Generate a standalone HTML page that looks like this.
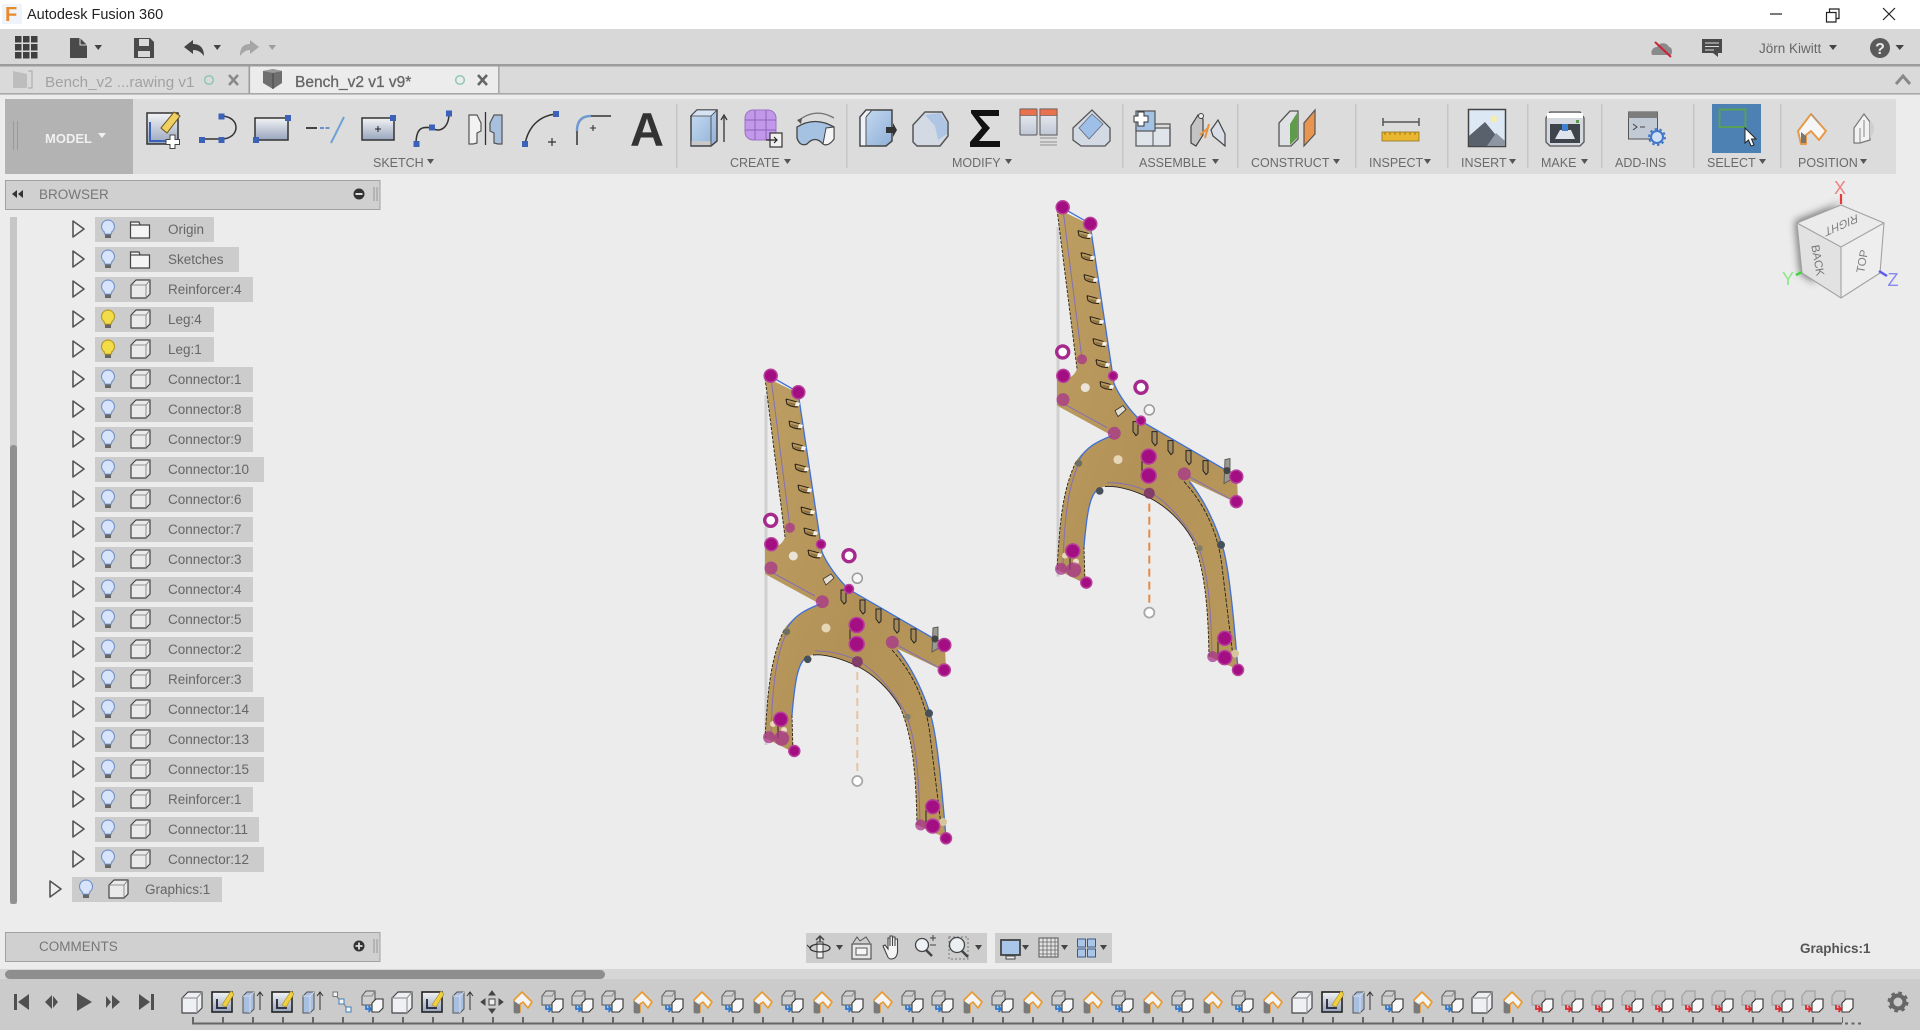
<!DOCTYPE html>
<html lang="en"><head><meta charset="utf-8"><title>Autodesk Fusion 360</title>
<style>
html,body{margin:0;padding:0;background:#ececec;width:1920px;height:1030px;overflow:hidden}
svg{display:block;font-family:"Liberation Sans",sans-serif}
.l{font-size:12.5px;fill:#6a6a6a}
.t{font-size:13.5px;fill:#666}
.m{fill:#a30f82;stroke:#b8409c;stroke-width:1.5}
.p{fill:#a8308c;opacity:.72}
.s{fill:#cccccc}
</style></head><body>
<svg width="1920" height="1030" viewBox="0 0 1920 1030" xmlns="http://www.w3.org/2000/svg">
<defs>
<filter id="bl" x="-40%" y="-40%" width="180%" height="180%"><feGaussianBlur stdDeviation="4"/></filter>
<linearGradient id="g1" x1="0" y1="0" x2="0" y2="1"><stop offset="0" stop-color="#f2f3f5"/><stop offset="1" stop-color="#98a5bd"/></linearGradient>
<linearGradient id="g2" x1="0" y1="0" x2="1" y2="1"><stop offset="0" stop-color="#c8dcf2"/><stop offset="1" stop-color="#8fb0d8"/></linearGradient>
<linearGradient id="g3" x1="0" y1="0" x2="0" y2="1"><stop offset="0" stop-color="#eef0f4"/><stop offset="1" stop-color="#c0c8d6"/></linearGradient>
<linearGradient id="wood" x1="0" y1="0" x2="1" y2="1"><stop offset="0" stop-color="#bd9e62"/><stop offset=".5" stop-color="#b39258"/><stop offset="1" stop-color="#b8985a"/></linearGradient>

<g id="b"><path d="M0,-10 a6.5,6.5 0 0 1 4,11.6 l-.9,2.6 h-6.2 l-.9,-2.6 A6.5,6.5 0 0 1 0,-10z" fill="#d7e4fb" stroke="#7394cc" stroke-width="1.2"/><rect x="-3" y="4.500" width="6" height="3.500" fill="#666"/></g>
<g id="y"><path d="M0,-10 a6.5,6.5 0 0 1 4,11.6 l-.9,2.6 h-6.2 l-.9,-2.6 A6.5,6.5 0 0 1 0,-10z" fill="#f3dc4a" stroke="#b59a22" stroke-width="1.2"/><rect x="-3" y="4.500" width="6" height="3.500" fill="#666"/></g>
<path id="a" d="M-5,-8 L6,0 L-5,8 Z" fill="#efefef" stroke="#555" stroke-width="1.6" stroke-linejoin="round"/>
<g id="f" fill="#f4f4f4" stroke="#444" stroke-width="1.2"><path d="M-9.500,-8 H-1 L0,-5 H9.500 V8 H-9.500 Z"/><path d="M-9.500,-5 H0" fill="none"/></g>
<g id="c" stroke="#444" stroke-width="1.2" stroke-linejoin="round"><path d="M-9,-4 L-4,-9 H10 V5 L6,9 H-9 Z" fill="#eaeaea"/><path d="M-9,-4 H6 V9 M6,-4 L10,-9" fill="none" stroke="#777" stroke-width=".8"/></g>

<g id="tc" stroke="#444" stroke-width="1.2" stroke-linejoin="round"><path d="M-10,-4 L-4,-10 H10 V6 L5,11 H-10 Z" fill="#eef0f4"/><path d="M-10,-4 H5 V11 M5,-4 L10,-10" fill="none" stroke="#999"/></g>
<g id="ts"><rect x="-10" y="-10" width="20" height="20" fill="url(#g1)" stroke="#222" stroke-width="1.600"/><path d="M-5,-3 V6 H5" fill="none" stroke="#223" stroke-width="1.800"/><path d="M0,3 L9,-11 L12,-8 L4,5 Z" fill="#f0d040" stroke="#a88b20" stroke-width=".6"/></g>
<g id="te" stroke="#555" stroke-width="1"><path d="M-9,-6 L-5,-10 H2 V7 L-2,11 H-9 Z" fill="#a7c0e0"/><path d="M-9,-6 H-2 V11 M-2,-6 L2,-10" fill="none" stroke="#dde"/><path d="M8,8 V-9" stroke="#333"/><path d="M5,-6 L8,-10 L11,-6" fill="none" stroke="#333"/></g>
<g id="td" fill="#f5f5f5" stroke="#3f7fc0" stroke-width="1"><rect x="-9" y="-10" width="4.500" height="4.500" stroke="#777"/><rect x="-3" y="-3" width="5" height="5"/><rect x="4" y="5" width="5" height="5"/><path d="M-5,-5 L-3,-3 M2,2 L4,5" fill="none" stroke="#777"/></g>
<g id="tb"><path d="M-10,-6 L-6,-11 H3 V3 H-10 Z" fill="#cfcfcf" stroke="#555" stroke-width="1"/><path d="M-10,-6 H0 L3,-11" fill="none" stroke="#888"/><path d="M0,1 L4,-3 H11 V6 L7,10 H0 Z" fill="#f8f8f8" stroke="#333" stroke-width="1.100"/><path d="M-6,3 V7 H-1 M-3.500,4 L-1,7 L-3.500,10" fill="none" stroke="#2f7ad0" stroke-width="1.800"/></g>
<g id="tr"><path d="M-10,-6 L-6,-11 H3 V3 H-10 Z" fill="#c6c6c6" stroke="#9a9a9a" stroke-width="1"/><path d="M0,1 L4,-3 H11 V6 L7,10 H0 Z" fill="#f8f8f8" stroke="#333" stroke-width="1.100"/><path d="M-6,3 V7 H-1 M-3.500,4 L-1,7 L-3.500,10" fill="none" stroke="#dc2a30" stroke-width="1.800"/></g>
<g id="tj"><path d="M-8,10 V-2 L0,-10 L10,0 L6,6 L1,0 L-2,2 V10 Z" fill="#f4f4f4" stroke="#e89a30" stroke-width="1.600" stroke-linejoin="round"/><path d="M-8,11 V-1 L-2,3 V11 Q-5,12 -8,11 Z" fill="#7a7a7a"/></g>
<g id="tm" fill="#444" stroke="#444"><rect x="-3" y="-3" width="6" height="6" fill="#eee"/><path d="M0,-11 L-3,-7 H3 Z M0,11 L-3,7 H3 Z M-11,0 L-7,-3 V3 Z M11,0 L7,-3 V3 Z"/></g>

<g id="n"><path d="M-7,-4 C-3,-3 1,-2 4,-1 M-7,-4 L-6,1 C-3,3 1,4 5,4" fill="none" stroke="#2a2218" stroke-width="1.100"/><path d="M-5,-1 L3,1 L2,3 L-4,1 Z" fill="#8d7040"/><path d="M3,-1 L7,0 L6,3 L2,3 Z" fill="#f4f2ec"/></g>
<path id="v" d="M-2,-7 H3 V5 L1,7 L-2,3 Z" fill="#a58b5c" stroke="#222" stroke-width="1"/>

<g id="bench">
<path d="M766,395 V745" stroke="#d0d0d0" stroke-width="3" fill="none"/>
<path id="bp" d="M765,377 L798,393 L822,552 C826,562 838,580 850,590 L945,645 L946,672 L898,649 C912,667 925,695 932,720 C938,745 942,790 946,838 L917,825 C916,770 912,735 900,707 C890,690 875,675 857,666 C840,658 825,654 813,655 C798,657 795,680 792,715 L793,752 L765,738 C768,690 770,660 785,628 C795,615 805,610 820,604 L765,574 L765,547 C775,548 782,546 785,537 Z" fill="url(#wood)"/>
<path d="M765,378 L785,537 M792,715 L793,752 M917,825 C916,770 912,735 900,707 M784,630 C770,660 768,690 765,738" fill="none" stroke="#2a2418" stroke-width=".9" stroke-dasharray="3 1.500"/>
<path d="M813,655 C825,654 840,658 857,666 C875,675 890,690 900,707" fill="none" stroke="#222" stroke-width=".9"/>
<path d="M892,650 C912,672 926,700 930,735 L941,825" fill="none" stroke="#222" stroke-width=".9" stroke-dasharray="4 1.500"/>
<path d="M771,378 L790,528 M773,573 L815,596 M897,645 L943,670 M771,737 C772,680 778,650 787,632 M815,651 C835,651 850,656 862,663 C880,675 895,695 905,712 C915,735 919,770 920,825" fill="none" stroke="#8570b4" stroke-width="1"/>
<path d="M770,376 L798,392 L822,552 C826,562 838,580 850,590 L945,645 M897,650 C912,667 925,695 932,720 C938,745 942,790 946,838 M792,715 C795,680 798,662 807,657 M787,628 C795,615 805,610 820,604" fill="none" stroke="#3e70d8" stroke-width="1.300"/>
<use href="#n" x="793" y="403"/><use href="#n" x="796" y="425"/><use href="#n" x="799" y="447"/><use href="#n" x="802" y="468"/><use href="#n" x="805" y="489"/><use href="#n" x="808" y="511"/><use href="#n" x="811" y="532"/><use href="#n" x="815" y="554"/>
<path d="M823,579 L831,574 L834,578 L826,585 Z" fill="#e4dfd0" stroke="#333" stroke-width=".8"/>
<use href="#v" x="843" y="597"/><use href="#v" x="862" y="607"/><use href="#v" x="878" y="616"/><use href="#v" x="896" y="626"/><use href="#v" x="913" y="636"/>
<path d="M933,628 L938,627 L938,640 L944,645 L932,652 Z" fill="#9a9a90" stroke="#555" stroke-width=".9"/>
<path d="M850,628 V645 M926,805 V826 M778,720 V738" stroke="#222" stroke-width="1" fill="none"/>
<circle cx="793.300" cy="556" r="4.500" fill="#e9e3d8"/><circle cx="826" cy="628" r="4.500" fill="#e6d7b8"/>
<circle cx="773" cy="724" r="3" fill="#e6d7b8"/><circle cx="784" cy="730" r="3" fill="#ecdfc8"/><circle cx="943" cy="822" r="4" fill="#d7c49c"/>
<circle class="m" cx="770.700" cy="375.700" r="6.500"/><circle class="m" cx="798.300" cy="392.300" r="6.500"/><circle class="m" cx="771.300" cy="544.300" r="6.500"/><circle class="m" cx="821" cy="544.300" r="4.500"/><circle class="p" cx="771" cy="568" r="6.500"/><circle class="p" cx="790" cy="527.700" r="5"/><circle class="m" cx="849" cy="589" r="4.500"/>
<circle class="p" cx="822.300" cy="601.700" r="6.500"/><circle class="m" cx="856.700" cy="625" r="7.500"/><circle class="m" cx="856.700" cy="644" r="7.500"/><circle class="p" cx="892.300" cy="642.300" r="6.500"/><circle class="m" cx="944.300" cy="645" r="6.500"/><circle class="m" cx="944.300" cy="670" r="6"/>
<circle cx="857.300" cy="661.700" r="5.500" fill="#7a3068" opacity=".85"/>
<circle class="m" cx="780.700" cy="719.300" r="7"/><circle class="p" cx="781.700" cy="738.300" r="7.500"/><circle class="p" cx="769" cy="737.300" r="6"/><circle class="m" cx="794.300" cy="751" r="5.500"/>
<circle class="m" cx="932.700" cy="806.700" r="7"/><circle class="m" cx="932.700" cy="826" r="7"/><circle class="p" cx="920.700" cy="825" r="5.500"/><circle class="m" cx="946" cy="838.300" r="5.500"/>
<circle cx="786.700" cy="631.700" r="3.500" fill="#6e6e60"/><circle cx="807.700" cy="659.300" r="3.800" fill="#45505a"/><circle cx="929" cy="713.300" r="4" fill="#45505a"/><circle cx="907.700" cy="716.700" r="3" fill="#7d7d70"/><circle cx="935" cy="639" r="3.500" fill="#444"/>
<circle cx="770.700" cy="520.300" r="6" fill="#fff" stroke="#a52a8c" stroke-width="3.400"/><circle cx="849" cy="555.700" r="6" fill="#fff" stroke="#a52a8c" stroke-width="3.400"/>
<circle cx="857.300" cy="578.300" r="5" fill="#f6f6f6" stroke="#999" stroke-width="1.500"/><circle cx="857.300" cy="781" r="5" fill="#fff" stroke="#a8a8a8" stroke-width="1.800"/>
</g>
</defs>

<!-- canvas -->
<rect width="1920" height="1030" fill="#ececec"/>
<path d="M857.300,672 V775" stroke="#e6c4a2" stroke-width="2" stroke-dasharray="8 5"/>
<path d="M1149.300,503.600 V606.600" stroke="#e48a48" stroke-width="2" stroke-dasharray="8 5"/>
<use href="#bench"/>
<use href="#bench" transform="translate(292,-168.400)"/>

<!-- title bar -->
<rect width="1920" height="29" fill="#fff"/>
<rect x="2" y="4" width="20" height="20" fill="#eef4fa"/>
<text x="5" y="21" font-size="20" font-weight="bold" fill="#e8892a">F</text>
<text x="27" y="19" font-size="14.500" fill="#222">Autodesk Fusion 360</text>
<path d="M1770,14 H1782" stroke="#222" stroke-width="1.200"/>
<path d="M1826.500,12.500 H1836 V22 H1826.500 Z M1829.500,12 V9 H1839 V18.500 H1836.500" fill="none" stroke="#222" stroke-width="1.200"/>
<path d="M1883,8 L1895,20 M1895,8 L1883,20" stroke="#222" stroke-width="1.200"/>

<!-- top toolbar -->
<rect y="29" width="1920" height="35" fill="#d8d8d8"/>
<rect y="64" width="1920" height="2.500" fill="#9c9c9c"/>
<g fill="#3f3f3f"><rect x="15" y="36" width="6.500" height="6.500"/><rect x="23" y="36" width="6.500" height="6.500"/><rect x="31" y="36" width="6.500" height="6.500"/><rect x="15" y="44" width="6.500" height="6.500"/><rect x="23" y="44" width="6.500" height="6.500"/><rect x="31" y="44" width="6.500" height="6.500"/><rect x="15" y="52" width="6.500" height="6.500"/><rect x="23" y="52" width="6.500" height="6.500"/><rect x="31" y="52" width="6.500" height="6.500"/></g>
<path d="M70,38 H80 L87,45 V58 H70 Z" fill="#4a4a4a"/><path d="M80,38 V45 H87" fill="none" stroke="#d8d8d8" stroke-width="1"/>
<path d="M94.500,45 H102 L98.250,50 Z" fill="#444"/>
<path d="M134,38 H150 L154,42 V58 H134 Z" fill="#4a4a4a"/><rect x="139" y="39" width="10" height="7" fill="#d8d8d8"/><rect x="138" y="51" width="12" height="6" fill="#d8d8d8"/>
<path d="M184,47 L193,40 V44 C200,44 204,48 204,56 C201,52 198,50 193,50 V54 Z" fill="#444"/>
<path d="M213.500,45 H221 L217.250,50 Z" fill="#444"/>
<path d="M259,47 L250,40 V44 C243,44 240,48 240,56 C243,52 246,50 250,50 V54 Z" fill="#a6a6a6"/>
<path d="M268.500,45 H276 L272.250,50 Z" fill="#9c9c9c"/>
<path d="M1652,55 C1650,50 1654,47 1657,47 C1659,42 1667,42 1669,47 C1672,47 1673,52 1671,55 Z" fill="#8a8a8a"/><path d="M1655,42 L1671,57" stroke="#d01f3a" stroke-width="2"/>
<path d="M1702,39 H1722 V53 H1718 V57 L1713,53 H1702 Z" fill="#4a4a4a"/><path d="M1705,43 H1719 M1705,46.500 H1719 M1705,50 H1714" stroke="#ddd" stroke-width="1"/>
<text x="1759" y="53" font-size="13.500" fill="#666">Jörn Kiwitt</text>
<path d="M1829,45 H1837 L1833,50 Z" fill="#444"/>
<circle cx="1880" cy="48" r="10" fill="#5a5a5a"/><text x="1880" y="54" font-size="16" font-weight="bold" fill="#e8e8e8" text-anchor="middle">?</text>
<path d="M1895.500,45 H1904 L1899.750,50 Z" fill="#444"/>

<!-- tabs -->
<rect y="66.500" width="1920" height="26.500" fill="#dadada"/>
<rect y="93" width="1920" height="1.600" fill="#a8a8a8"/>
<rect x="250" y="66.500" width="248" height="26.500" fill="#ececec"/>
<rect x="248.500" y="66.500" width="1.600" height="27" fill="#9c9c9c"/><rect x="498" y="66.500" width="1.600" height="27" fill="#a8a8a8"/>
<path d="M13,71 L27,74 V88 H13 Z" fill="#bdbdbd"/><path d="M28,71 H32 V88 H28" fill="none" stroke="#a6a6a6"/>
<text x="45" y="87" font-size="15.200" fill="#a2a2a2">Bench_v2 ...rawing v1</text>
<circle cx="209" cy="80" r="4.300" fill="none" stroke="#8fc8b0" stroke-width="1.500"/>
<path d="M229,75 L238,85 M238,75 L229,85" stroke="#8a8a8a" stroke-width="2.600"/>
<path d="M263,71 L273,69 L282,71 V83 L273,89 L263,83 Z" fill="#6f6f6f"/><path d="M263,71 L273,73 L282,71 L273,69 Z" fill="#9a9a9a"/><path d="M273,73 V89" stroke="#444"/>
<text x="295" y="87" font-size="15.500" fill="#666" stroke="#666" stroke-width=".3">Bench_v2 v1 v9*</text>
<circle cx="460" cy="80" r="4.300" fill="none" stroke="#8fc8b0" stroke-width="1.500"/>
<path d="M478,75 L487,85 M487,75 L478,85" stroke="#666" stroke-width="2.600"/>
<path d="M1896,84 L1903,76 L1910,84" fill="none" stroke="#888" stroke-width="3"/>

<!-- ribbon -->
<rect x="5" y="99" width="1891" height="75" fill="#dcdcdc"/>
<rect x="5" y="99" width="128" height="75" fill="#b3b3b3"/>
<path d="M13.500,121 V150 M17.500,121 V150" stroke="#9a9a9a" stroke-width="1"/>
<text x="45" y="143" font-size="13" font-weight="bold" fill="#f0f0f0">MODEL</text>
<path d="M98,133 H106 L102,138 Z" fill="#f0f0f0"/>
<g fill="#c6c6c6"><rect x="676" y="104" width="1.500" height="64"/><rect x="846" y="104" width="1.500" height="64"/><rect x="1122" y="104" width="1.500" height="64"/><rect x="1237" y="104" width="1.500" height="64"/><rect x="1355" y="104" width="1.500" height="64"/><rect x="1447" y="104" width="1.500" height="64"/><rect x="1527" y="104" width="1.500" height="64"/><rect x="1601" y="104" width="1.500" height="64"/><rect x="1693" y="104" width="1.500" height="64"/><rect x="1780" y="104" width="1.500" height="64"/></g>
<g>
<text x="373" y="167" class="l">SKETCH</text><text x="730" y="167" class="l">CREATE</text><text x="952" y="167" class="l">MODIFY</text><text x="1139" y="167" class="l">ASSEMBLE</text><text x="1251" y="167" class="l">CONSTRUCT</text><text x="1369" y="167" class="l">INSPECT</text><text x="1461" y="167" class="l">INSERT</text><text x="1541" y="167" class="l">MAKE</text><text x="1615" y="167" class="l">ADD-INS</text><text x="1707" y="167" class="l">SELECT</text><text x="1798" y="167" class="l">POSITION</text>
</g>
<g fill="#555"><path d="M427,159 H434 L430.500,164 Z"/><path d="M784,159 H791 L787.500,164 Z"/><path d="M1005,159 H1012 L1008.500,164 Z"/><path d="M1212,159 H1219 L1215.500,164 Z"/><path d="M1333,159 H1340 L1336.500,164 Z"/><path d="M1424,159 H1431 L1427.500,164 Z"/><path d="M1509,159 H1516 L1512.500,164 Z"/><path d="M1581,159 H1588 L1584.500,164 Z"/><path d="M1759,159 H1766 L1762.500,164 Z"/><path d="M1860,159 H1867 L1863.500,164 Z"/></g>

<!-- sketch icons -->
<rect x="147" y="113" width="31" height="31" fill="url(#g1)" stroke="#333" stroke-width="1.500"/>
<path d="M150,122 V141 H166" fill="none" stroke="#3a62b8" stroke-width="2"/>
<path d="M161,128 L174,112 L180,116 L167,133 Z" fill="#f0d060" stroke="#6b5820" stroke-width="1"/>
<path d="M170,135 h5 v4.500 h4.500 v5 h-4.500 v4 h-5 v-4 h-4 v-5 h4 z" fill="#fff" stroke="#444" stroke-width="1"/>
<path d="M199,139 H221 C241,139 241,116 221,116" fill="none" stroke="#333" stroke-width="1.500"/>
<g fill="#3b62b8"><rect x="199" y="137" width="6" height="6"/><rect x="218.500" y="137" width="6" height="6"/><rect x="218.500" y="113.500" width="6" height="6"/></g>
<rect x="255" y="118" width="33" height="22" fill="url(#g1)" stroke="#333" stroke-width="1.500"/>
<rect x="285" y="115" width="6" height="6" fill="#3b62b8"/><rect x="253" y="137" width="6" height="6" fill="#3b62b8"/>
<path d="M306,128 H317" stroke="#333" stroke-width="1.800"/><path d="M320,128 H330" stroke="#5d86c8" stroke-width="1.800" stroke-dasharray="4 1.500"/><path d="M331,143 L344,117" stroke="#6fa0d8" stroke-width="2"/>
<rect x="362" y="118" width="32" height="22" fill="url(#g1)" stroke="#333" stroke-width="1.500"/><path d="M375,129 H381 M378,126 V132" stroke="#222"/><rect x="390" y="115" width="6" height="6" fill="#3b62b8"/>
<path d="M416,144 C416,125 425,127 432,128 C440,133 449,128 449,113" fill="none" stroke="#333" stroke-width="1.500"/>
<g fill="#3b62b8"><rect x="413.500" y="141" width="6" height="6"/><rect x="429" y="124.500" width="6" height="6"/><rect x="446" y="110.500" width="6" height="6"/></g>
<path d="M469,115 H477 L481,123 V131 L477,133 V143 L473,144 H469 Z" fill="#f2f2f2" stroke="#555" stroke-width="1.200"/><path d="M485.500,112 V145" stroke="#333" stroke-width="1.300"/><path d="M502,115 H494 L490,123 V131 L494,133 V143 L498,144 H502 Z" fill="#a8c0de" stroke="#555" stroke-width="1.200"/>
<path d="M525,144 C528,128 538,116 556,114" fill="none" stroke="#333" stroke-width="1.500"/><rect x="522" y="141" width="6" height="6" fill="#3b62b8"/><rect x="553" y="111" width="6" height="6" fill="#3b62b8"/><path d="M548,142 H556 M552,138 V146" stroke="#333" stroke-width="1.200"/>
<path d="M577,145 V130 M590,116 H611" stroke="#333" stroke-width="1.500" fill="none"/><path d="M577,131 Q577,116 591,116" fill="none" stroke="#6f9ad0" stroke-width="2.500"/><path d="M590,128 H596 M593,125 V131" stroke="#333" stroke-width="1.100"/>
<text x="630" y="146" font-size="47" font-weight="bold" fill="#333">A</text>

<!-- create -->
<path d="M691,116 L697,110 H717 V141 L711,146 H691 Z" fill="url(#g2)" stroke="#444" stroke-width="1.500"/><path d="M691,116 H711 L717,110 H697 Z" fill="#d5e3f4" stroke="#444" stroke-width=".8"/><path d="M711,116 V146" stroke="#555"/><rect x="691.500" y="141" width="19" height="4" fill="#c9c9c9"/>
<path d="M724,142 V117 M721,120 L724,115 L727,120" fill="none" stroke="#333" stroke-width="1.300"/>
<rect x="745" y="110" width="31" height="30" rx="8" fill="#c299ea" stroke="#9a72c4" stroke-width="1"/><path d="M745,120 H776 M745,130 H776 M755,110 V140 M766,110 V140" stroke="#8e62bc" stroke-width="1"/>
<rect x="770" y="133" width="12" height="14" fill="#efefef" stroke="#333" stroke-width="1.200"/><path d="M766,140 H777 M774,137 L777,140 L774,143" fill="none" stroke="#222" stroke-width="1.200"/>
<path d="M798,121 Q815,107 834,118" fill="none" stroke="#777" stroke-width="1.400"/><path d="M797,120 L802,118 L801,124 Z" fill="#555"/>
<path d="M797,127 Q815,116 834,127 V139 Q828,147 823,144 Q815,135 807,144 Q800,147 797,138 Z" fill="#a5c2e2" stroke="#444" stroke-width="1.300"/><path d="M823,144 L826,128 L834,127 V139 Q828,147 823,144 Z" fill="#f5f5f5" stroke="#444" stroke-width="1"/>
<!-- modify -->
<path d="M860,117 L866,110 H892 V141 L886,146 H860 Z" fill="url(#g2)" stroke="#444" stroke-width="1.500"/><path d="M860.800,117 L866.500,110.800 H872 L866,117 V145.300 H860.800 Z" fill="#eef2f8"/><path d="M866,117 V146 M866,117 L872,110" stroke="#555" fill="none"/><path d="M886,127 H893 V123 L897,130 L893,137 V133 H886 Z" fill="#333"/>
<path d="M913,142 V125 L925,112 H942 L948,122 V136 L940,146 H917 Z" fill="#d3dae4" stroke="#555" stroke-width="1.500" stroke-linejoin="round"/><path d="M925,115 L940,113 L947,123 V134 L938,140 L935,126 Z" fill="#aec6e4"/>
<path d="M971,110 H999 V116 H979 L990,128 L979,141 H1000 V147 H970 V142 L982,128 L971,113 Z" fill="#111"/>
<rect x="1020" y="109" width="17" height="26" rx="1" fill="url(#g3)" stroke="#555"/><rect x="1020" y="109" width="17" height="6.500" fill="#e8724e" stroke="#555" stroke-width=".6"/>
<rect x="1040" y="109" width="17" height="26" fill="url(#g3)" stroke="#555"/><rect x="1040" y="109" width="17" height="6.500" fill="#e8724e" stroke="#555" stroke-width=".6"/><path d="M1040,138 H1057 M1040,142 H1057 M1040,145 H1057" stroke="#aaa" stroke-width="1.500"/>
<path d="M1073,128 L1092,110 L1110,128 V141 L1105,146 H1081 L1073,140 Z" fill="#d3dae4" stroke="#555" stroke-width="1.300"/><path d="M1079,128 L1092,114 L1103,124 L1089,139 Z" fill="#9ec0e8" stroke="#667" stroke-width=".8"/>
<!-- assemble -->
<rect x="1136" y="128" width="34" height="18" fill="#dfe3ea" stroke="#555" stroke-width="1.200"/><path d="M1153,128 V146 M1153,128 L1156,124" stroke="#555" fill="none"/><path d="M1155,124 H1170 V146" fill="none" stroke="#555" stroke-width="1.200"/>
<rect x="1136" y="111" width="19" height="20" fill="#a4c2e4" stroke="#555" stroke-width="1.200"/>
<path d="M1138,112 h6 v4 h4 v6 h-4 v4 h-6 v-4 h-4 v-6 h4 z" fill="#fff" stroke="#333" stroke-width="1"/>
<path d="M1191,143 V126 L1198,115 L1203,119 V135 L1196,146 Z" fill="#c4c4c4" stroke="#444" stroke-width="1.200"/><path d="M1211,130 L1218,120 L1225,134 V146 L1213,136 Z" fill="#d8dde6" stroke="#444" stroke-width="1.200"/><path d="M1205,138 L1209,124 M1200,135 L1208,128" stroke="#e69240" stroke-width="2"/><circle cx="1201" cy="116" r="2.500" fill="#eee" stroke="#444"/>
<!-- construct -->
<path d="M1279,145 V123 L1290,111 H1298 V139 L1291,146 H1279 Z" fill="#dfe1e4" stroke="#555" stroke-width="1.300"/><path d="M1290,124 L1297,113 V138 L1290,145 Z" fill="#5e9c4b"/>
<path d="M1304,146 V123 L1315,110 V134 Z" fill="#e8954f" stroke="#555" stroke-width="1.200"/>
<!-- inspect -->
<path d="M1383,122 H1419 M1383,118 V126 M1419,118 V126" stroke="#555" stroke-width="1.500"/><rect x="1382" y="132" width="37" height="9" fill="#e9b730" stroke="#8f7426" stroke-width=".8"/><path d="M1385,132 V135 M1390,132 V135 M1395,132 V135 M1400,132 V135 M1405,132 V135 M1410,132 V135 M1415,132 V135" stroke="#8f6a10" stroke-width=".8"/>
<!-- insert -->
<rect x="1468.500" y="109.500" width="37" height="37" fill="#dce8f4" stroke="#444" stroke-width="1.500"/><circle cx="1494" cy="119" r="3.500" fill="#f5ecb0"/><path d="M1469,146 V136 L1485,122 L1495,134 L1505,146 Z" fill="#59616d"/><path d="M1487,146 L1496,133 L1505,141 V146 Z" fill="#8d96a2"/>
<!-- make -->
<path d="M1546,118 L1550,112 H1580 L1584,118 V142 L1580,146 H1550 L1546,142 Z" fill="#d5d8de" stroke="#555" stroke-width="1.300"/><rect x="1550" y="124" width="30" height="19" fill="#3f444c"/><rect x="1547" y="113" width="36" height="5" fill="#fff"/><path d="M1555,139 L1560,130 H1571 L1575,139 Z" fill="#dfe4ec"/><rect x="1562" y="124" width="6" height="7" fill="#3f7fd0"/><rect x="1576" y="120" width="3" height="3" fill="#5a9a4a"/>
<!-- add-ins -->
<rect x="1628.500" y="112" width="29" height="27" fill="#c2cad6" stroke="#555"/><rect x="1628.500" y="112" width="29" height="6" fill="#7d7d7d"/><path d="M1633,124 L1637,127 L1633,130 M1640,127 H1645" fill="none" stroke="#444"/>
<circle cx="1657" cy="137" r="6" fill="#cfe0f6" stroke="#3f76c8" stroke-width="2"/><circle cx="1657" cy="137" r="8" fill="none" stroke="#3f76c8" stroke-width="1.800" stroke-dasharray="2.500 2.500"/>
<!-- select -->
<rect x="1712" y="104" width="49" height="49" fill="#4d81b3"/><rect x="1719.500" y="109.500" width="26" height="17.500" fill="none" stroke="#59a34d" stroke-width="1.800"/>
<path d="M1745,128 V143 L1748.500,140 L1751,146 L1754,145 L1751.500,139 L1756,139 Z" fill="#fff" stroke="#222" stroke-width="1"/>
<!-- position -->
<path d="M1798,131 L1811,114 L1826,131 L1819,140 L1811,131 L1806,135 V144 H1801 Z" fill="#f6f6f6" stroke="#e59a4a" stroke-width="2" stroke-linejoin="round"/><path d="M1801,143 V132 L1806,136 V143 Z" fill="#777"/><path d="M1811,114 L1819,123" stroke="#999"/>
<path d="M1854,128 L1864,114 L1870,122 V140 L1860,143 H1854 Z" fill="#f2f2f2" stroke="#777" stroke-width="1.200"/><path d="M1860,128 V143 M1864,120 V137" stroke="#888"/><path d="M1870,120 Q1878,128 1870,138 Z" fill="#cfcfcf"/>

<!-- viewcube -->
<path d="M1841,203 L1795,221 L1800,273 L1815,283 L1815,232 Z" fill="#555" opacity=".8" filter="url(#bl)"/>
<path d="M1841,205 L1884,223 L1880,273 L1841,298 L1802,273 L1797,223 Z" fill="#e8e8e8"/>
<path d="M1841,205 L1884,223 L1841,247 L1797,223 Z" fill="#ebebeb"/>
<path d="M1797,223 L1841,247 V298 L1802,273 Z" fill="#e2e2e2"/><path d="M1884,223 L1841,247 V298 L1880,273 Z" fill="#eeeeee"/>
<path d="M1841,205 L1884,223 L1880,273 L1841,298 L1802,273 L1797,223 Z M1797,223 L1841,247 L1884,223 M1841,247 V298" fill="none" stroke="#a2a2a2" stroke-width="1.100"/>
<text font-size="11.500" fill="#808080" text-anchor="middle" transform="translate(1841,221) rotate(156) skewX(-20)">RIGHT</text>
<text font-size="11.500" fill="#777" text-anchor="middle" transform="translate(1814,261) rotate(80)">BACK</text>
<text font-size="11.500" fill="#808080" text-anchor="middle" transform="translate(1866,262) rotate(-80)">TOP</text>
<path d="M1841,194 V204" stroke="#e63a3a" stroke-width="2.200"/><path d="M1796,275 L1802,272" stroke="#3ed43e" stroke-width="2.500"/><path d="M1879,271 L1887,276" stroke="#5a5af0" stroke-width="2.500"/>
<text x="1840" y="194" font-size="18" fill="#f08080" text-anchor="middle">X</text><text x="1788" y="285" font-size="18" fill="#88e888" text-anchor="middle">Y</text><text x="1893" y="286" font-size="18" fill="#8888f0" text-anchor="middle">Z</text>

<!-- browser -->
<rect x="5.500" y="180.500" width="374.500" height="29" fill="#d0d0d0" stroke="#a2a2a2"/>
<path d="M12,194 L17,190 V198 Z M18,194 L23,190 V198 Z" fill="#333"/>
<text x="39" y="199" font-size="13.500" fill="#777">BROWSER</text>
<circle cx="359" cy="194" r="5.500" fill="#333"/><rect x="355.500" y="193" width="7" height="2" fill="#ddd"/>
<path d="M374,187 V201 M377,187 V201" stroke="#999"/>

<rect x="10" y="217" width="7" height="687" fill="#c6c6c6"/><rect x="10" y="445" width="7" height="459" rx="3" fill="#909090"/>

<g class="s">
<rect x="95" y="217" width="119" height="25"/><rect x="95" y="247" width="144" height="25"/><rect x="95" y="277" width="158" height="25"/><rect x="95" y="307" width="119" height="25"/><rect x="95" y="337" width="119" height="25"/><rect x="95" y="367" width="158" height="25"/><rect x="95" y="397" width="158" height="25"/><rect x="95" y="427" width="158" height="25"/><rect x="95" y="457" width="169" height="25"/><rect x="95" y="487" width="158" height="25"/><rect x="95" y="517" width="158" height="25"/><rect x="95" y="547" width="158" height="25"/><rect x="95" y="577" width="158" height="25"/><rect x="95" y="607" width="158" height="25"/><rect x="95" y="637" width="158" height="25"/><rect x="95" y="667" width="158" height="25"/><rect x="95" y="697" width="169" height="25"/><rect x="95" y="727" width="169" height="25"/><rect x="95" y="757" width="169" height="25"/><rect x="95" y="787" width="158" height="25"/><rect x="95" y="817" width="164" height="25"/><rect x="95" y="847" width="169" height="25"/><rect x="72" y="877" width="150" height="25"/>
</g>
<g><use href="#a" x="78" y="229"/><use href="#a" x="78" y="259"/><use href="#a" x="78" y="289"/><use href="#a" x="78" y="319"/><use href="#a" x="78" y="349"/><use href="#a" x="78" y="379"/><use href="#a" x="78" y="409"/><use href="#a" x="78" y="439"/><use href="#a" x="78" y="469"/><use href="#a" x="78" y="499"/><use href="#a" x="78" y="529"/><use href="#a" x="78" y="559"/><use href="#a" x="78" y="589"/><use href="#a" x="78" y="619"/><use href="#a" x="78" y="649"/><use href="#a" x="78" y="679"/><use href="#a" x="78" y="709"/><use href="#a" x="78" y="739"/><use href="#a" x="78" y="769"/><use href="#a" x="78" y="799"/><use href="#a" x="78" y="829"/><use href="#a" x="78" y="859"/><use href="#a" x="55" y="889"/></g>
<g><use href="#b" x="108" y="230"/><use href="#b" x="108" y="260"/><use href="#b" x="108" y="290"/><use href="#y" x="108" y="320"/><use href="#y" x="108" y="350"/><use href="#b" x="108" y="380"/><use href="#b" x="108" y="410"/><use href="#b" x="108" y="440"/><use href="#b" x="108" y="470"/><use href="#b" x="108" y="500"/><use href="#b" x="108" y="530"/><use href="#b" x="108" y="560"/><use href="#b" x="108" y="590"/><use href="#b" x="108" y="620"/><use href="#b" x="108" y="650"/><use href="#b" x="108" y="680"/><use href="#b" x="108" y="710"/><use href="#b" x="108" y="740"/><use href="#b" x="108" y="770"/><use href="#b" x="108" y="800"/><use href="#b" x="108" y="830"/><use href="#b" x="108" y="860"/><use href="#b" x="86" y="890"/></g>
<g><use href="#f" x="140" y="230"/><use href="#f" x="140" y="260"/><use href="#c" x="140" y="289"/><use href="#c" x="140" y="319"/><use href="#c" x="140" y="349"/><use href="#c" x="140" y="379"/><use href="#c" x="140" y="409"/><use href="#c" x="140" y="439"/><use href="#c" x="140" y="469"/><use href="#c" x="140" y="499"/><use href="#c" x="140" y="529"/><use href="#c" x="140" y="559"/><use href="#c" x="140" y="589"/><use href="#c" x="140" y="619"/><use href="#c" x="140" y="649"/><use href="#c" x="140" y="679"/><use href="#c" x="140" y="709"/><use href="#c" x="140" y="739"/><use href="#c" x="140" y="769"/><use href="#c" x="140" y="799"/><use href="#c" x="140" y="829"/><use href="#c" x="140" y="859"/><use href="#c" x="118" y="889"/></g>
<g>
<text class="t" x="168" y="234">Origin</text><text class="t" x="168" y="264">Sketches</text><text class="t" x="168" y="294">Reinforcer:4</text><text class="t" x="168" y="324">Leg:4</text><text class="t" x="168" y="354">Leg:1</text><text class="t" x="168" y="384">Connector:1</text><text class="t" x="168" y="414">Connector:8</text><text class="t" x="168" y="444">Connector:9</text><text class="t" x="168" y="474">Connector:10</text><text class="t" x="168" y="504">Connector:6</text><text class="t" x="168" y="534">Connector:7</text><text class="t" x="168" y="564">Connector:3</text><text class="t" x="168" y="594">Connector:4</text><text class="t" x="168" y="624">Connector:5</text><text class="t" x="168" y="654">Connector:2</text><text class="t" x="168" y="684">Reinforcer:3</text><text class="t" x="168" y="714">Connector:14</text><text class="t" x="168" y="744">Connector:13</text><text class="t" x="168" y="774">Connector:15</text><text class="t" x="168" y="804">Reinforcer:1</text><text class="t" x="168" y="834">Connector:11</text><text class="t" x="168" y="864">Connector:12</text><text class="t" x="145" y="894">Graphics:1</text>
</g>

<!-- comments -->
<rect x="5.500" y="932.500" width="374.500" height="29" fill="#d0d0d0" stroke="#a2a2a2"/>
<text x="39" y="951" font-size="13.500" fill="#777">COMMENTS</text>
<circle cx="359" cy="946" r="5.500" fill="#333"/><path d="M355.500,946 H362.500 M359,942.500 V949.500" stroke="#ddd" stroke-width="1.800"/>
<path d="M374,939 V953 M377,939 V953" stroke="#999"/>

<!-- view bar -->
<rect x="806" y="933" width="181" height="30" fill="#cdcdcd"/><rect x="995" y="933" width="117" height="30" fill="#cdcdcd"/>
<path d="M820,937 V958 M816,940 L820,936 L824,940" fill="none" stroke="#444" stroke-width="1.500"/><rect x="817" y="942" width="6" height="16" fill="#f4f4f4" stroke="#444"/><ellipse cx="820" cy="948" rx="10" ry="4" fill="none" stroke="#333" stroke-width="1.300"/><path d="M810,948 L807,945 M810,948 L813,945" stroke="#333"/>
<path d="M836,945 H843 L839.500,950 Z" fill="#444"/>
<rect x="852" y="944" width="19" height="15" fill="#e8e8e8" stroke="#555" stroke-width="1.200"/><rect x="856" y="948" width="11" height="7" fill="#f6f6f6" stroke="#555"/><path d="M853,943 L857,937 L860,941 L866,937 L870,943" fill="none" stroke="#555"/>
<path d="M887,955 L883,946 L885,945 L888,949 V938 H890 V946 V936 H892.500 V946 V937 H895 V946 V939 H897.500 V948 C898,955 896,959 891,959 C889,959 888,958 887,955 Z" fill="#f4f4f4" stroke="#444" stroke-width="1.100"/>
<circle cx="922" cy="945" r="6.500" fill="#eef2f6" stroke="#444" stroke-width="1.300"/><path d="M926,950 L932,956" stroke="#444" stroke-width="2.500"/><path d="M930,938 H936 M933,935 V941 M930,945 H936" stroke="#444"/>
<rect x="949" y="937" width="19" height="22" fill="none" stroke="#777" stroke-dasharray="2 2"/><circle cx="957" cy="945" r="7.500" fill="#eaf0f2" stroke="#444" stroke-width="1.300"/><path d="M962,951 L968,957" stroke="#444" stroke-width="2.500"/>
<path d="M975,945 H982 L978.500,950 Z" fill="#444"/>
<rect x="1001" y="940" width="19" height="15" fill="#a9c5e8" stroke="#444" stroke-width="1.800"/><path d="M1006,956 H1015 V959 H1006 Z" fill="#eee" stroke="#444"/>
<path d="M1022,945 H1029 L1025.500,950 Z" fill="#444"/>
<rect x="1039" y="938" width="19" height="19" fill="#e4e4e4" stroke="#555"/><path d="M1043,938 V957 M1047,938 V957 M1051,938 V957 M1055,938 V957 M1039,942 H1058 M1039,946 H1058 M1039,950 H1058 M1039,954 H1058" stroke="#666" stroke-width=".8"/>
<path d="M1061,945 H1068 L1064.500,950 Z" fill="#444"/>
<rect x="1077.500" y="939" width="8" height="8" fill="#a9c5e8" stroke="#3a5a8a"/><rect x="1087.500" y="939" width="8" height="8" fill="#a9c5e8" stroke="#3a5a8a"/><rect x="1077.500" y="949" width="8" height="8" fill="#a9c5e8" stroke="#3a5a8a"/><rect x="1087.500" y="949" width="8" height="8" fill="#a9c5e8" stroke="#3a5a8a"/>
<path d="M1100,945 H1107 L1103.500,950 Z" fill="#444"/>
<text x="1800" y="953" font-size="13.500" font-weight="bold" fill="#555">Graphics:1</text>

<!-- timeline -->
<rect y="969" width="1920" height="10" fill="#d6d6d6"/>
<rect x="5" y="970" width="600" height="9" rx="4.500" fill="#8e8e8e"/>
<rect y="979" width="1920" height="51" fill="#cbcbcb"/>
<g fill="#505050"><rect x="14" y="994" width="3" height="16"/><path d="M29,994 V1010 L18,1002 Z"/><path d="M45,1002 L52,995 V1009 Z M53,996 L58,1002 L53,1008 Z" /><path d="M77,993 L92,1002 L77,1011 Z"/><path d="M106,996 L111,1002 L106,1008 Z M112,995 L120,1002 L112,1009 Z"/><path d="M139,994 V1010 L150,1002 Z"/><rect x="151" y="994" width="3" height="16"/></g>
<path d="M192,1023.500 H1842" stroke="#666" stroke-width="2"/><path d="M192,1020 H1843" stroke="#666" stroke-width="6" stroke-dasharray="2 28"/><path d="M1845,1023.500 H1864" stroke="#666" stroke-width="2" stroke-dasharray="3 3.500"/>
<use href="#tc" x="192" y="1002"/><use href="#ts" x="222" y="1002"/><use href="#te" x="252" y="1002"/><use href="#ts" x="282" y="1002"/><use href="#te" x="312" y="1002"/><use href="#td" x="342" y="1002"/><use href="#tb" x="372" y="1002"/><use href="#tc" x="402" y="1002"/><use href="#ts" x="432" y="1002"/><use href="#te" x="462" y="1002"/><use href="#tm" x="492" y="1002"/><use href="#tj" x="522" y="1002"/><use href="#tb" x="552" y="1002"/><use href="#tb" x="582" y="1002"/><use href="#tb" x="612" y="1002"/><use href="#tj" x="642" y="1002"/><use href="#tb" x="672" y="1002"/><use href="#tj" x="702" y="1002"/><use href="#tb" x="732" y="1002"/><use href="#tj" x="762" y="1002"/><use href="#tb" x="792" y="1002"/><use href="#tj" x="822" y="1002"/><use href="#tb" x="852" y="1002"/><use href="#tj" x="882" y="1002"/><use href="#tb" x="912" y="1002"/><use href="#tb" x="942" y="1002"/><use href="#tj" x="972" y="1002"/><use href="#tb" x="1002" y="1002"/><use href="#tj" x="1032" y="1002"/><use href="#tb" x="1062" y="1002"/><use href="#tj" x="1092" y="1002"/><use href="#tb" x="1122" y="1002"/><use href="#tj" x="1152" y="1002"/><use href="#tb" x="1182" y="1002"/><use href="#tj" x="1212" y="1002"/><use href="#tb" x="1242" y="1002"/><use href="#tj" x="1272" y="1002"/><use href="#tc" x="1302" y="1002"/><use href="#ts" x="1332" y="1002"/><use href="#te" x="1362" y="1002"/><use href="#tb" x="1392" y="1002"/><use href="#tj" x="1422" y="1002"/><use href="#tb" x="1452" y="1002"/><use href="#tc" x="1482" y="1002"/><use href="#tj" x="1512" y="1002"/><use href="#tr" x="1542" y="1002"/><use href="#tr" x="1572" y="1002"/><use href="#tr" x="1602" y="1002"/><use href="#tr" x="1632" y="1002"/><use href="#tr" x="1662" y="1002"/><use href="#tr" x="1692" y="1002"/><use href="#tr" x="1722" y="1002"/><use href="#tr" x="1752" y="1002"/><use href="#tr" x="1782" y="1002"/><use href="#tr" x="1812" y="1002"/><use href="#tr" x="1842" y="1002"/>
<circle cx="1898" cy="1002" r="6.500" fill="none" stroke="#666" stroke-width="4"/><circle cx="1898" cy="1002" r="9" fill="none" stroke="#666" stroke-width="3" stroke-dasharray="3.500 3.570"/>
</svg>
</body></html>
